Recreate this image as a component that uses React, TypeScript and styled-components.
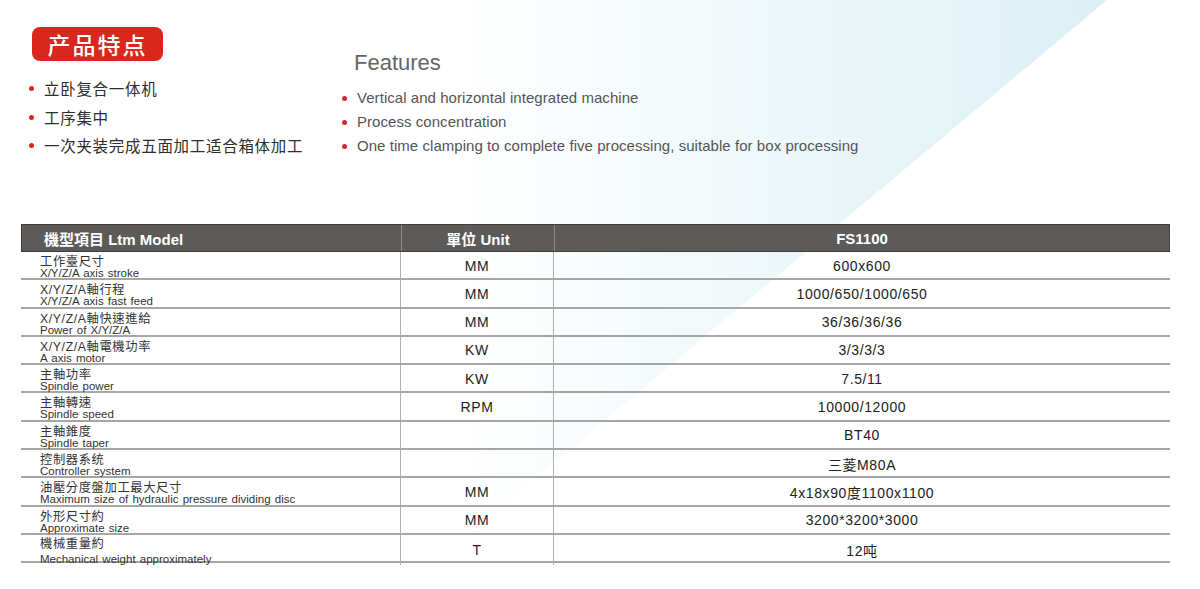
import React from 'react';
import styled, { createGlobalStyle } from 'styled-components';

interface SpecRow {
  zh: string;
  en: string;
  unit: string;
  value: string;
}

const features = [
  { zh: '立卧复合一体机', en: 'Vertical and horizontal integrated machine' },
  { zh: '工序集中', en: 'Process concentration' },
  {
    zh: '一次夹装完成五面加工适合箱体加工',
    en: 'One time clamping to complete five processing, suitable for box processing'
  }
];

const specs: SpecRow[] = [
  { zh: '工作臺尺寸', en: 'X/Y/Z/A axis stroke', unit: 'MM', value: '600x600' },
  { zh: 'X/Y/Z/A軸行程', en: 'X/Y/Z/A axis fast feed', unit: 'MM', value: '1000/650/1000/650' },
  { zh: 'X/Y/Z/A軸快速進給', en: 'Power of X/Y/Z/A', unit: 'MM', value: '36/36/36/36' },
  { zh: 'X/Y/Z/A軸電機功率', en: 'A axis motor', unit: 'KW', value: '3/3/3/3' },
  { zh: '主軸功率', en: 'Spindle power', unit: 'KW', value: '7.5/11' },
  { zh: '主軸轉速', en: 'Spindle speed', unit: 'RPM', value: '10000/12000' },
  { zh: '主軸錐度', en: 'Spindle taper', unit: '', value: 'BT40' },
  { zh: '控制器系统', en: 'Controller system', unit: '', value: '三菱M80A' },
  {
    zh: '油壓分度盤加工最大尺寸',
    en: 'Maximum size of hydraulic pressure dividing disc',
    unit: 'MM',
    value: '4x18x90度1100x1100'
  },
  { zh: '外形尺寸約', en: 'Approximate size', unit: 'MM', value: '3200*3200*3000' },
  { zh: '機械重量約', en: 'Mechanical weight approximately', unit: 'T', value: '12吨' }
];

const GlobalStyle = createGlobalStyle`
  body {
    margin: 0;
    background: #fff;
    font-family: 'Liberation Sans', 'Noto Sans CJK SC', sans-serif;
  }
`;

const Page = styled.div`
  position: relative;
  width: 1200px;
  height: 589px;
  overflow: hidden;
  padding: 27px 30px 0 21px;
  box-sizing: border-box;

  &::before {
    content: '';
    position: absolute;
    inset: 0;
    clip-path: polygon(1107px 0, 403px 589px, 0 589px, 0 0);
    background: linear-gradient(
      to right,
      rgba(220, 240, 245, 0) 38%,
      rgba(220, 240, 245, 1) 92%
    );
  }
`;

const Content = styled.div`
  position: relative;
  z-index: 1;
`;

const TopSection = styled.section`
  display: flex;
  height: 197px;
  padding-left: 11px;
`;

const LeftColumn = styled.div`
  width: 311px;
`;

const Badge = styled.div`
  display: inline-flex;
  align-items: center;
  justify-content: center;
  width: 131px;
  height: 34px;
  border-radius: 8px;
  background: #d8271d;
  color: #fff;
  font-family: 'Noto Sans CJK SC', sans-serif;
  font-size: 23px;
  font-weight: 500;
  letter-spacing: 2px;
`;

const BulletList = styled.ul<{ $lineHeight: number }>`
  list-style: none;
  margin: 0;
  padding: 0;

  li {
    position: relative;
    padding-left: 14px;
    line-height: ${p => p.$lineHeight}px;
    white-space: nowrap;
  }

  li::before {
    content: '';
    position: absolute;
    left: -1px;
    top: 50%;
    width: 5px;
    height: 5px;
    margin-top: -2px;
    border-radius: 50%;
    background: #d8271d;
  }
`;

const ZhList = styled(BulletList)`
  margin: 13px 0 0 -2px;
  font-family: 'Noto Sans CJK SC', sans-serif;
  font-size: 15.5px;
  letter-spacing: 0.7px;
  color: #2e2e2e;
`;

const RightColumn = styled.div`
  padding-top: 23px;
`;

const FeaturesTitle = styled.h2`
  margin: 0 0 10px 11px;
  font-size: 22px;
  font-weight: normal;
  line-height: 26px;
  color: #666;
`;

const EnList = styled(BulletList)`
  font-size: 15px;
  letter-spacing: 0.05px;
  color: #555;
`;

const SpecTable = styled.div`
  width: 1149px;
`;

const Row = styled.div<{ $header?: boolean }>`
  display: grid;
  grid-template-columns: 379px 153px 1fr;
  box-sizing: border-box;
  height: ${p => (p.$header ? '28px' : '28.3px')};
  background: ${p => (p.$header ? '#5d5b59' : 'transparent')};
  border: ${p => (p.$header ? '1px solid #3f3e3d' : 'none')};
  border-bottom: ${p => (p.$header ? '1px solid #3f3e3d' : '2px solid #a6a6a6')};
  color: ${p => (p.$header ? '#fff' : '#222')};
`;

const HeadCell = styled.div<{ $left?: boolean }>`
  display: flex;
  align-items: center;
  justify-content: ${p => (p.$left ? 'flex-start' : 'center')};
  padding-left: ${p => (p.$left ? '22px' : '0')};
  font-family: 'Liberation Sans', 'Noto Sans CJK TC', sans-serif;
  font-size: 15px;
  font-weight: bold;
  & + & {
    border-left: 1px solid #8c8a88;
  }
`;

const LabelCell = styled.div<{ $last?: boolean }>`
  display: flex;
  flex-direction: column;
  padding: ${p => (p.$last ? '3px 0 0 19px' : '4px 0 0 19px')};
  gap: ${p => (p.$last ? '4px' : '0')};
  color: #333;
`;

const LabelZh = styled.span`
  font-family: 'Liberation Sans', 'Noto Sans CJK TC', sans-serif;
  font-size: 12.3px;
  line-height: 12px;
  letter-spacing: 0.6px;
`;

const LabelEn = styled.span`
  font-size: 11.5px;
  line-height: 11px;
  word-spacing: 1px;
`;

const ValueCell = styled.div`
  display: flex;
  align-items: center;
  justify-content: center;
  border-left: 1px solid #b0b0b0;
  font-family: 'Liberation Sans', 'Noto Sans CJK SC', sans-serif;
  font-size: 14px;
  letter-spacing: 0.6px;
  color: #222;
`;

export default function App() {
  return (
    <Page>
      <GlobalStyle />
      <Content>
        <TopSection>
          <LeftColumn>
            <Badge>产品特点</Badge>
            <ZhList $lineHeight={28.5}>
              {features.map(f => (
                <li key={f.zh}>{f.zh}</li>
              ))}
            </ZhList>
          </LeftColumn>
          <RightColumn>
            <FeaturesTitle>Features</FeaturesTitle>
            <EnList $lineHeight={24}>
              {features.map(f => (
                <li key={f.en}>{f.en}</li>
              ))}
            </EnList>
          </RightColumn>
        </TopSection>

        <SpecTable>
          <Row $header>
            <HeadCell $left>機型項目 Ltm Model</HeadCell>
            <HeadCell>單位 Unit</HeadCell>
            <HeadCell>FS1100</HeadCell>
          </Row>
          {specs.map((s, i) => (
            <Row key={s.zh}>
              <LabelCell $last={i === specs.length - 1}>
                <LabelZh>{s.zh}</LabelZh>
                <LabelEn>{s.en}</LabelEn>
              </LabelCell>
              <ValueCell>{s.unit}</ValueCell>
              <ValueCell>{s.value}</ValueCell>
            </Row>
          ))}
        </SpecTable>
      </Content>
    </Page>
  );
}
